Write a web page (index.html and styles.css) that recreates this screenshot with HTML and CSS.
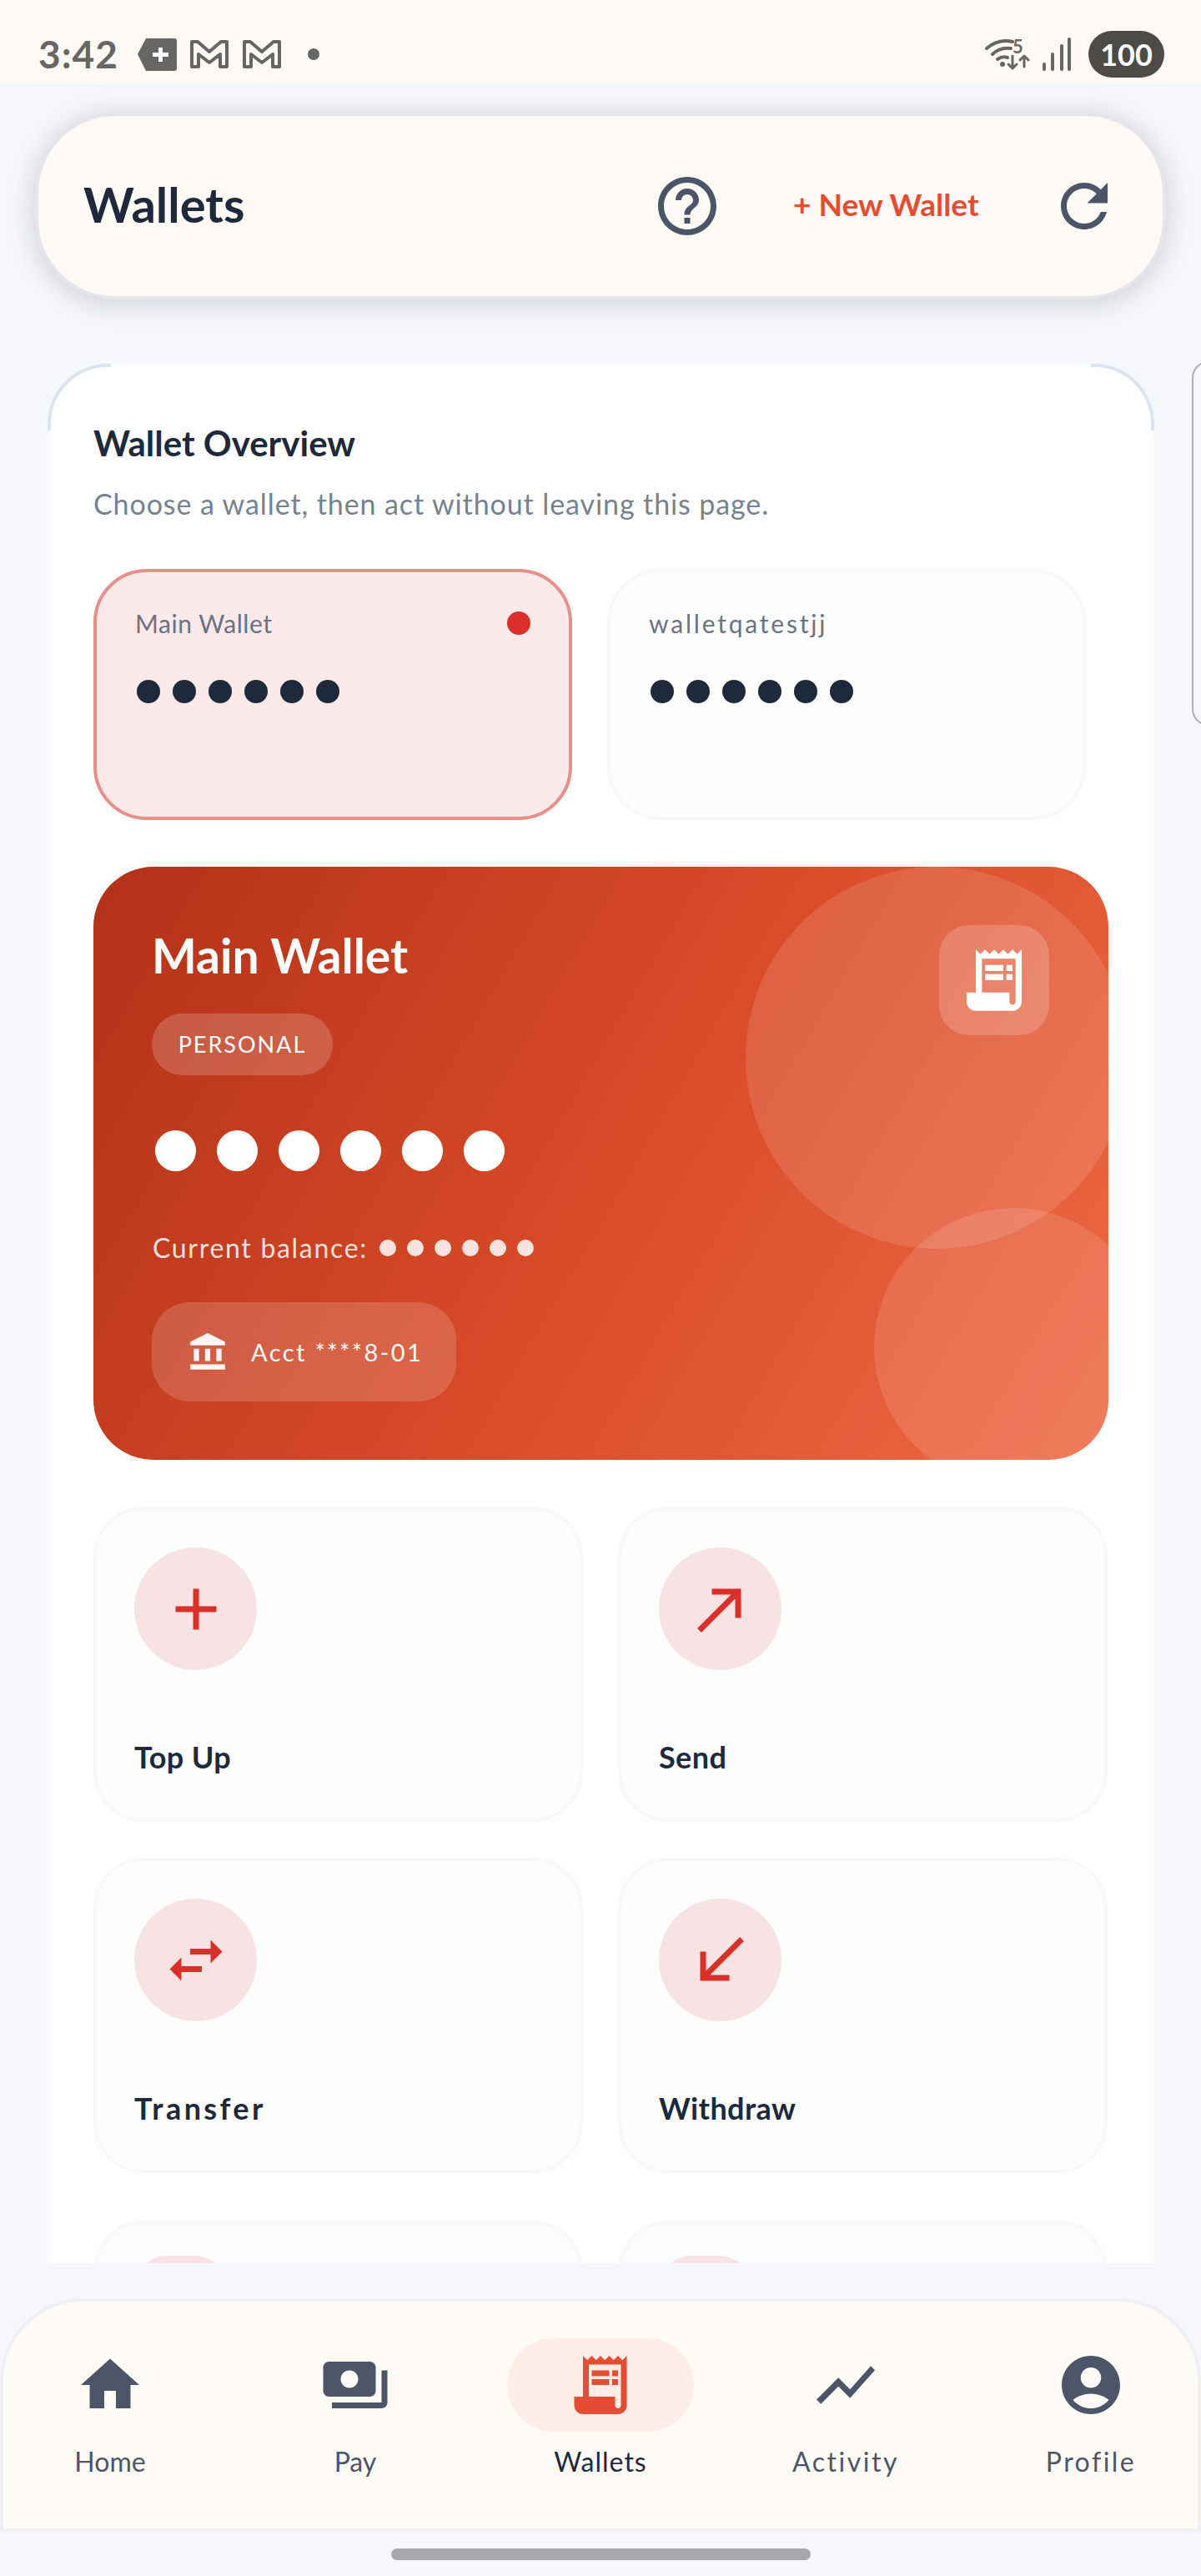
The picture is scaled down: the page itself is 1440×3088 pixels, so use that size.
FILE: index.html
```html
<!DOCTYPE html>
<html lang="en">
<head>
    <meta charset="UTF-8">
    <meta name="viewport" content="width=device-width, initial-scale=1.0">
    <title>Wallets</title>
    <link rel="stylesheet" href="styles.css">
</head>
<body>
    <div class="status-bar">
        <span class="status-time">3:42</span>
        <svg class="status-tag" viewBox="0 0 47 39"><path d="M10 0h34a3 3 0 0 1 3 3v33a3 3 0 0 1-3 3H10L0 19z" fill="#666"/><path d="M25 11h5v6h7v5h-7v6h-5v-6h-7v-5h7z" fill="#fff"/></svg>
        <svg class="status-mail" viewBox="0 0 48 38"><path d="M3 4h7l14 12L38 4h7v30h-8V19L24 29 11 19v15H3z" fill="none" stroke="#666" stroke-width="4" stroke-linejoin="round"/></svg>
        <svg class="status-mail" viewBox="0 0 48 38"><path d="M3 4h7l14 12L38 4h7v30h-8V19L24 29 11 19v15H3z" fill="none" stroke="#666" stroke-width="4" stroke-linejoin="round"/></svg>
        <span class="status-dot"></span>
        <div class="status-wifi">
            <svg viewBox="0 0 54 37">
                <g fill="none" stroke="#666" stroke-width="4" stroke-linecap="round">
                    <path d="M2 11Q16-1 33 3"/>
                    <path d="M9 18Q18 9 31 11"/>
                    <path d="M15 24Q21 20 27 22"/>
                </g>
                <circle cx="21" cy="30" r="3" fill="#666"/>
                <g fill="none" stroke="#666" stroke-width="3" stroke-linecap="round" stroke-linejoin="round">
                    <path d="M33 20v15m-5-5l5 5 5-5"/>
                    <path d="M47 33V20m-5 5l5-5 5 5"/>
                </g>
            </svg>
            <span class="wifi-five">5</span>
        </div>
        <svg class="status-signal" viewBox="0 0 36 40">
            <g stroke="#666" stroke-width="4" stroke-linecap="round">
                <path d="M4 32v6"/>
                <path d="M14 20v18"/>
                <path d="M25 10v28"/>
                <path d="M34 2v36"/>
            </g>
        </svg>
        <span class="status-battery">100</span>
    </div>

    <header class="top-bar">
        <h1 class="top-title">Wallets</h1>
        <svg class="top-icon top-help" viewBox="0 0 24 24"><path d="M11 18h2v-2h-2v2zm1-16C6.48 2 2 6.48 2 12s4.48 10 10 10 10-4.48 10-10S17.52 2 12 2zm0 18c-4.41 0-8-3.59-8-8s3.59-8 8-8 8 3.59 8 8-3.59 8-8 8zm0-14c-2.21 0-4 1.79-4 4h2c0-1.1.9-2 2-2s2 .9 2 2c0 2-3 1.75-3 5h2c0-2.25 3-2.5 3-5 0-2.21-1.79-4-4-4z"/></svg>
        <a class="new-wallet">+ New Wallet</a>
        <svg class="top-icon" viewBox="0 0 24 24"><path d="M17.65 6.35C16.2 4.9 14.21 4 12 4c-4.42 0-7.99 3.58-7.99 8s3.57 8 7.99 8c3.73 0 6.84-2.55 7.73-6h-2.08c-.82 2.33-3.04 4-5.65 4-3.31 0-6-2.69-6-6s2.69-6 6-6c1.66 0 3.14.69 4.22 1.78L13 11h7V4l-2.35 2.35z"/></svg>
    </header>

    <div class="page-peek"></div>

    <main class="scroll-area">
        <section class="panel">
            <h2 class="panel-title">Wallet Overview</h2>
            <p class="panel-sub">Choose a wallet, then act without leaving this page.</p>

            <div class="wallet-row">
                <div class="wallet-chip active">
                    <div class="chip-head">
                        <span class="chip-name">Main Wallet</span>
                        <span class="chip-mark"></span>
                    </div>
                    <div class="dots dots-chip"><i></i><i></i><i></i><i></i><i></i><i></i></div>
                </div>
                <div class="wallet-chip">
                    <div class="chip-head">
                        <span class="chip-name wide">walletqatestjj</span>
                    </div>
                    <div class="dots dots-chip"><i></i><i></i><i></i><i></i><i></i><i></i></div>
                </div>
            </div>

            <div class="hero">
                <span class="hero-circle big"></span>
                <span class="hero-circle small"></span>
                <div class="hero-top">
                    <div>
                        <div class="hero-name">Main Wallet</div>
                        <span class="hero-badge">PERSONAL</span>
                    </div>
                    <div class="hero-tile">
                        <svg viewBox="0 0 24 24"><path d="M19.5 3.5L18 2l-1.5 1.5L15 2l-1.5 1.5L12 2l-1.5 1.5L9 2 7.5 3.5 6 2v14H3v3c0 1.66 1.34 3 3 3h12c1.66 0 3-1.34 3-3V2l-1.5 1.5zM19 19c0 .55-.45 1-1 1s-1-.45-1-1v-3H8V5h11v14z"/><path d="M9 7h6v2H9zm7 0h2v2h-2zM9 10h6v2H9zm7 0h2v2h-2z"/></svg>
                    </div>
                </div>
                <div class="dots dots-hero"><i></i><i></i><i></i><i></i><i></i><i></i></div>
                <div class="hero-balance">
                    <span>Current balance:</span>
                    <div class="dots dots-small"><i></i><i></i><i></i><i></i><i></i><i></i></div>
                </div>
                <div class="hero-acct">
                    <svg viewBox="0 0 24 24"><path d="M4 10h3v7H4zm6.5 0h3v7h-3zM2 19h20v3H2zm15-9h3v7h-3zM12 1L2 6v2h20V6z"/></svg>
                    <span>Acct ****8-01</span>
                </div>
            </div>

            <div class="action-grid">
                <div class="action-card">
                    <div class="action-icon"><svg viewBox="0 0 24 24"><path d="M19 13h-6v6h-2v-6H5v-2h6V5h2v6h6v2z"/></svg></div>
                    <div class="action-label">Top Up</div>
                </div>
                <div class="action-card">
                    <div class="action-icon"><svg viewBox="0 0 24 24"><path d="M9 5v2h6.59L4 18.59 5.41 20 17 8.41V15h2V5z"/></svg></div>
                    <div class="action-label">Send</div>
                </div>
                <div class="action-card">
                    <div class="action-icon"><svg viewBox="0 0 24 24"><path d="M6.99 11L3 15l3.99 4v-3H14v-2H6.99v-3zM21 9l-3.99-4v3H10v2h7.01v3L21 9z"/></svg></div>
                    <div class="action-label wide">Transfer</div>
                </div>
                <div class="action-card">
                    <div class="action-icon"><svg viewBox="0 0 24 24"><path d="M20 5.41L18.59 4 7 15.59V9H5v10h10v-2H8.41z"/></svg></div>
                    <div class="action-label">Withdraw</div>
                </div>
            </div>

            <div class="action-grid more">
                <div class="action-card"><div class="action-icon"></div></div>
                <div class="action-card"><div class="action-icon"></div></div>
            </div>
        </section>
    </main>

    <nav class="bottom-nav">
        <div class="nav-item">
            <div class="nav-icon"><svg viewBox="0 0 24 24"><path d="M10 20v-6h4v6h5v-8h3L12 3 2 12h3v8z"/></svg></div>
            <span class="nav-label">Home</span>
        </div>
        <div class="nav-item">
            <div class="nav-icon"><svg viewBox="0 0 24 24"><path d="M19 14V6c0-1.1-.9-2-2-2H3c-1.1 0-2 .9-2 2v8c0 1.1.9 2 2 2h14c1.1 0 2-.9 2-2zm-9-1c-1.66 0-3-1.34-3-3s1.34-3 3-3 3 1.34 3 3-1.34 3-3 3zm13-6v11c0 1.1-.9 2-2 2H4v-2h17V7h2z"/></svg></div>
            <span class="nav-label">Pay</span>
        </div>
        <div class="nav-item active">
            <div class="nav-icon"><svg viewBox="0 0 24 24"><path d="M19.5 3.5L18 2l-1.5 1.5L15 2l-1.5 1.5L12 2l-1.5 1.5L9 2 7.5 3.5 6 2v14H3v3c0 1.66 1.34 3 3 3h12c1.66 0 3-1.34 3-3V2l-1.5 1.5zM19 19c0 .55-.45 1-1 1s-1-.45-1-1v-3H8V5h11v14z"/><path d="M9 7h6v2H9zm7 0h2v2h-2zM9 10h6v2H9zm7 0h2v2h-2z"/></svg></div>
            <span class="nav-label">Wallets</span>
        </div>
        <div class="nav-item">
            <div class="nav-icon"><svg viewBox="0 0 24 24"><path d="M3.5 18.49l6-6.01 4 4L22 6.92l-1.41-1.41-7.09 7.97-4-4L2 16.99z"/></svg></div>
            <span class="nav-label wide">Activity</span>
        </div>
        <div class="nav-item">
            <div class="nav-icon"><svg viewBox="0 0 24 24"><path d="M12 2C6.48 2 2 6.48 2 12s4.48 10 10 10 10-4.48 10-10S17.52 2 12 2zm0 4c1.93 0 3.5 1.57 3.5 3.5S13.93 13 12 13s-3.5-1.57-3.5-3.5S10.07 6 12 6zm0 14c-2.03 0-4.43-.82-6.14-2.88C7.55 15.8 9.68 15 12 15s4.45.8 6.14 2.12C16.43 19.18 14.03 20 12 20z"/></svg></div>
            <span class="nav-label wide">Profile</span>
        </div>
    </nav>
    <div class="home-bar"></div>
</body>
</html>
```

FILE: styles.css
```css
* {
    box-sizing: border-box;
}

body {
    margin: 0;
    width: 1440px;
    height: 3088px;
    overflow: hidden;
    position: relative;
    display: flex;
    flex-direction: column;
    background: #f5f7fb;
    font-family: "Lato", "Open Sans", sans-serif;
    color: #1e293b;
}

/* status bar */
.status-bar {
    height: 100px;
    flex: none;
    padding: 30px 44px 0 46px;
    display: flex;
    align-items: center;
    background: #fef9f5;
}

.status-time {
    width: 96px;
    font-size: 46px;
    line-height: 56px;
    font-weight: 700;
    letter-spacing: 1px;
    color: #666;
}

.status-tag {
    width: 47px;
    height: 39px;
    margin-left: 23px;
}

.status-mail {
    width: 48px;
    height: 38px;
    margin-left: 15px;
}

.status-dot {
    width: 14px;
    height: 14px;
    margin-left: 31px;
    border-radius: 50%;
    background: #666;
}

.status-wifi {
    position: relative;
    width: 54px;
    height: 37px;
    margin-left: auto;
}

.status-wifi svg {
    display: block;
    width: 54px;
    height: 37px;
}

.wifi-five {
    position: absolute;
    left: 33px;
    top: -3px;
    font-size: 22px;
    line-height: 24px;
    font-weight: 700;
    color: #666;
}

.status-signal {
    width: 36px;
    height: 40px;
    margin-left: 13px;
}

.status-battery {
    width: 91px;
    height: 56px;
    margin-left: 21px;
    border-radius: 28px;
    background: #4d4b47;
    color: #fff;
    font-size: 36px;
    line-height: 56px;
    font-weight: 700;
    text-align: center;
}

/* header */
.top-bar {
    height: 224px;
    flex: none;
    margin: 35px 42px 0;
    padding: 0 52px 0 54px;
    display: flex;
    align-items: center;
    background: #fef9f5;
    border: 4px solid #e4e6eb;
    border-radius: 96px;
    box-shadow: 0 4px 32px rgba(30, 41, 59, 0.2);
}

.top-title {
    margin: 0 0 4px;
    font-size: 58px;
    line-height: 72px;
    font-weight: 700;
    color: #1e293b;
}

.top-icon {
    width: 84px;
    height: 84px;
    flex: none;
    fill: #4b5568;
}

.top-help {
    margin-left: auto;
}

.new-wallet {
    width: 221px;
    margin: 0 86px 4px 85px;
    font-size: 37px;
    line-height: 44px;
    font-weight: 700;
    white-space: nowrap;
    color: #e44d33;
}

/* next page edge */
.page-peek {
    position: absolute;
    left: 1429px;
    top: 433px;
    width: 40px;
    height: 437px;
    border: 2px solid #b0b0b0;
    border-radius: 20px;
}

/* content */
.scroll-area {
    height: 2277px;
    flex: none;
    margin: 77px 56px 0 57px;
    overflow: hidden;
}

.panel {
    position: relative;
    padding: 72px 52px 60px;
    background: #fff;
    border: 3px solid #fafbfd;
    border-radius: 72px 72px 0 0;
}

.panel::before,
.panel::after {
    content: "";
    position: absolute;
    top: -3px;
    width: 72px;
    height: 76px;
    border-top: 4px solid #dbe4ef;
}

.panel::before {
    left: -3px;
    border-left: 4px solid #dbe4ef;
    border-top-left-radius: 72px;
}

.panel::after {
    right: -3px;
    border-right: 4px solid #dbe4ef;
    border-top-right-radius: 72px;
}

.panel-title {
    margin: 0;
    font-size: 42px;
    line-height: 40px;
    font-weight: 700;
    color: #1e293b;
}

.panel-sub {
    margin: 33px 0 0;
    font-size: 34px;
    line-height: 40px;
    letter-spacing: 0.9px;
    color: #778290;
}

.wallet-row {
    display: flex;
    gap: 42px;
    margin-top: 58px;
}

.wallet-chip {
    width: 574px;
    height: 301px;
    padding: 44px 46px;
    background: #fefefe;
    border: 4px solid #f8f9fb;
    border-radius: 64px;
}

.wallet-chip.active {
    background: #fce9e9;
    border-color: #e98f8a;
}

.chip-head {
    height: 34px;
    display: flex;
    align-items: center;
    justify-content: space-between;
}

.chip-name {
    font-size: 30px;
    line-height: 34px;
    letter-spacing: 0.55px;
    color: #6b7280;
}

.chip-name.wide {
    letter-spacing: 2.8px;
}

.chip-mark {
    width: 28px;
    height: 28px;
    border-radius: 50%;
    background: #db2f2a;
}

.dots {
    display: flex;
}

.dots i {
    display: block;
    flex: none;
    border-radius: 50%;
    background: currentColor;
}

.dots-chip {
    gap: 15px;
    margin: 51px 0 0 2px;
    color: #1e293b;
}

.dots-chip i {
    width: 28px;
    height: 28px;
}

/* main wallet card */
.hero {
    position: relative;
    height: 711px;
    margin-top: 56px;
    padding: 70px 71px 0 70px;
    overflow: hidden;
    border-radius: 72px;
    background: linear-gradient(120deg, #b23118 0%, #d84a28 50%, #ee6a45 100%);
    color: #fff;
}

.hero-circle {
    position: absolute;
    border-radius: 50%;
    background: rgba(255, 255, 255, 0.12);
}

.hero-circle.big {
    left: 782px;
    top: 0;
    width: 458px;
    height: 458px;
}

.hero-circle.small {
    left: 936px;
    top: 409px;
    width: 334px;
    height: 334px;
}

.hero-top {
    position: relative;
    display: flex;
    justify-content: space-between;
    align-items: flex-start;
}

.hero-name {
    font-size: 57px;
    line-height: 72px;
    font-weight: 700;
    white-space: nowrap;
}

.hero-badge {
    display: block;
    width: 217px;
    height: 74px;
    margin-top: 34px;
    border-radius: 37px;
    background: rgba(255, 255, 255, 0.18);
    font-size: 27px;
    line-height: 74px;
    letter-spacing: 2px;
    text-align: center;
}

.hero-tile {
    width: 132px;
    height: 132px;
    display: flex;
    align-items: center;
    justify-content: center;
    border-radius: 36px;
    background: rgba(255, 255, 255, 0.18);
}

.hero-tile svg {
    width: 88px;
    height: 88px;
    fill: #fff;
}

.dots-hero {
    position: relative;
    gap: 25px;
    margin: 66px 0 0 4px;
    color: #fff;
}

.dots-hero i {
    width: 49px;
    height: 49px;
}

.hero-balance {
    position: relative;
    display: flex;
    align-items: center;
    margin: 77px 0 0 1px;
    font-size: 32px;
    line-height: 30px;
    letter-spacing: 1.7px;
    color: rgba(255, 255, 255, 0.85);
}

.dots-small {
    gap: 13px;
    margin-left: 14px;
}

.dots-small i {
    width: 20px;
    height: 20px;
}

.hero-acct {
    position: relative;
    width: 365px;
    height: 119px;
    margin-top: 50px;
    padding-left: 42px;
    display: flex;
    align-items: center;
    gap: 27px;
    border-radius: 46px;
    background: rgba(255, 255, 255, 0.16);
    font-size: 29px;
    letter-spacing: 2.4px;
}

.hero-acct svg {
    width: 50px;
    height: 50px;
    fill: #fff5f2;
}

/* action buttons */
.action-grid {
    display: grid;
    grid-template-columns: 587px 587px;
    gap: 43px 42px;
    margin-top: 56px;
}

.action-grid.more {
    margin-top: 57px;
}

.action-card {
    height: 378px;
    padding: 45px;
    background: #fdfdfe;
    border: 4px solid #f8f9fb;
    border-radius: 60px;
}

.action-icon {
    width: 147px;
    height: 147px;
    display: flex;
    align-items: center;
    justify-content: center;
    border-radius: 50%;
    background: #f7e3e3;
}

.action-icon svg {
    width: 84px;
    height: 84px;
    fill: #db2f2a;
}

.action-label {
    margin-top: 84px;
    font-size: 36px;
    line-height: 40px;
    font-weight: 700;
    letter-spacing: 0.4px;
    color: #1e293b;
}

.action-label.wide {
    letter-spacing: 3.4px;
}

.action-grid.more .action-card {
    background: #fbfcfe;
}

.action-grid.more .action-icon {
    width: 112px;
    border-radius: 40px;
    margin-top: -7px;
}

/* bottom nav */
.bottom-nav {
    height: 280px;
    flex: none;
    margin-top: 42px;
    padding: 44px 16px 0;
    display: flex;
    gap: 70px;
    background: #fefbf6;
    border: 4px solid #eef0f3;
    border-radius: 100px 100px 0 0;
}

.nav-item {
    width: 224px;
    flex: none;
    display: flex;
    flex-direction: column;
    align-items: center;
}

.nav-icon {
    width: 224px;
    height: 112px;
    flex: none;
    display: flex;
    align-items: center;
    justify-content: center;
    border-radius: 56px;
}

.nav-icon svg {
    width: 84px;
    height: 84px;
    fill: #4c5668;
}

.nav-label {
    margin-top: 18px;
    font-size: 32px;
    line-height: 36px;
    color: #4c5668;
}

.nav-label.wide {
    letter-spacing: 2.5px;
}

.nav-item.active .nav-icon {
    background: #feede7;
}

.nav-item.active .nav-icon svg {
    fill: #e44d33;
}

.nav-item.active .nav-label {
    letter-spacing: 1px;
    color: #1e293b;
}

.home-bar {
    width: 503px;
    height: 14px;
    margin: 20px auto 0;
    flex: none;
    border-radius: 7px;
    background: #a8a9ad;
}
```
